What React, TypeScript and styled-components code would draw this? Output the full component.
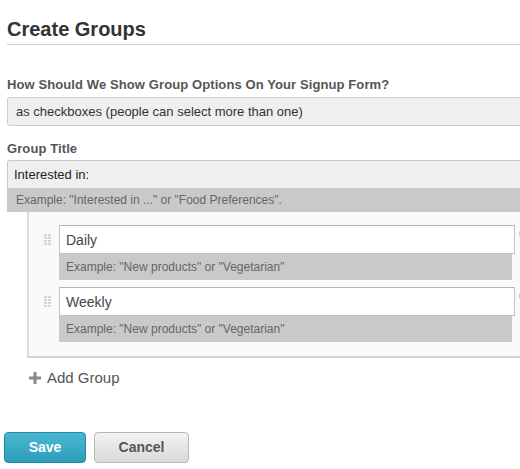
import React from "react";
import styled, { createGlobalStyle } from "styled-components";

const Global = createGlobalStyle`
  html, body { margin: 0; padding: 0; background: #fff; }
  body { width: 520px; height: 469px; overflow: hidden; font-family: "Liberation Sans", Arial, sans-serif; }
`;

const Page = styled.div`
  width: 580px;
  padding: 17px 0 0 7px;
  box-sizing: border-box;
`;

const Heading = styled.h1`
  margin: 0;
  font-size: 20px;
  line-height: 24px;
  font-weight: bold;
  color: #333;
  padding-bottom: 3px;
  border-bottom: 1px solid #cfcfcf;
`;

const Label = styled.div<{ $top: number }>`
  margin-top: ${(p) => p.$top}px;
  font-size: 13px;
  line-height: 16px;
  font-weight: bold;
  color: #555;
  letter-spacing: 0.1px;
`;

const Select = styled.div`
  margin-top: 4px;
  height: 27px;
  line-height: 27px;
  padding: 0 8px;
  background: #efefef;
  border: 1px solid #cdcdcd;
  border-radius: 3px;
  font-size: 13px;
  color: #333;
`;

const FieldBlock = styled.div<{ $top: number }>`
  margin-top: ${(p) => p.$top}px;
`;

const TitleInput = styled.div`
  height: 27px;
  line-height: 27px;
  padding: 0 6px;
  background: #efefef;
  border: 1px solid #c9c9c9;
  border-bottom: none;
  border-radius: 3px 0 0 0;
  font-size: 13px;
  color: #222;
`;

const Hint = styled.div<{ $h: number; $pad: number }>`
  height: ${(p) => p.$h}px;
  line-height: ${(p) => p.$h}px;
  padding-left: ${(p) => p.$pad}px;
  background: #c9c9c9;
  font-size: 12px;
  color: #666;
`;

const Panel = styled.div`
  margin-left: 20px;
  padding: 13px 0 14px 0;
  background: #fafafa;
  border-left: 2px solid #dcdcdc;
  border-bottom: 2px solid #d2d2d2;
  display: flex;
  flex-direction: column;
  gap: 7px;
`;

const Item = styled.div`
  display: flex;
  align-items: flex-start;
  position: relative;
  width: 486px;
`;

const Handle = styled.div`
  width: 7px;
  margin: 9px 8px 0 15px;
  display: grid;
  grid-template-columns: 3px 3px;
  column-gap: 1px;
  row-gap: 1px;
  & > span { width: 3px; height: 2px; background: #d4d4d4; }
`;

const ItemBody = styled.div`
  flex: 1;
  display: flex;
  flex-direction: column;
`;

const ItemInput = styled.div`
  height: 27px;
  line-height: 28px;
  padding: 0 6px;
  background: #fff;
  border: 1px solid #c2c2c2;
  border-top-color: #b5b5b5;
  font-size: 14px;
  color: #444;
`;

const ItemHint = styled(Hint)`
  margin-right: 3px;
`;

const Remove = styled.div`
  position: absolute;
  left: 490px;
  top: 5px;
  width: 8px;
  height: 8px;
  border-radius: 50%;
  background: #c8c8c8;
`;

const AddRow = styled.div`
  margin: 11px 0 0 22px;
  display: flex;
  align-items: center;
  gap: 6px;
  font-size: 15px;
  line-height: 18px;
  color: #555;
`;

const Buttons = styled.div`
  margin: 45px 0 0 -3px;
  display: flex;
  gap: 8px;
`;

const Button = styled.div<{ $primary?: boolean }>`
  height: 29px;
  line-height: 29px;
  width: ${(p) => (p.$primary ? 80 : 93)}px;
  text-align: center;
  border-radius: 4px;
  font-size: 14px;
  font-weight: bold;
  border: 1px solid ${(p) => (p.$primary ? "#1f8aa5" : "#b8b8b8")};
  color: ${(p) => (p.$primary ? "#fff" : "#555")};
  background: ${(p) =>
    p.$primary
      ? "linear-gradient(#4ab8d1, #2c9dba)"
      : "linear-gradient(#f3f3f3, #d9d9d9)"};
`;

const Plus = () => (
  <svg width="12" height="12" viewBox="0 0 12 12">
    <path d="M4.5 0h3v4.5H12v3H7.5V12h-3V7.5H0v-3h4.5z" fill="#8a8a8a" />
  </svg>
);

const DragHandle = () => (
  <Handle>
    {Array.from({ length: 8 }).map((_, i) => (
      <span key={i} />
    ))}
  </Handle>
);

const groups = ["Daily", "Weekly"];

export default function App() {
  return (
    <>
      <Global />
      <Page>
        <Heading>Create Groups</Heading>
        <Label $top={32}>How Should We Show Group Options On Your Signup Form?</Label>
        <Select>as checkboxes (people can select more than one)</Select>
        <Label $top={15}>Group Title</Label>
        <FieldBlock $top={3}>
          <TitleInput>Interested in:</TitleInput>
          <Hint $h={24} $pad={9}>Example: "Interested in ..." or "Food Preferences".</Hint>
        </FieldBlock>
        <Panel>
          {groups.map((g) => (
            <Item key={g}>
              <DragHandle />
              <ItemBody>
                <ItemInput>{g}</ItemInput>
                <ItemHint $h={26} $pad={7}>Example: "New products" or "Vegetarian"</ItemHint>
              </ItemBody>
              <Remove />
            </Item>
          ))}
        </Panel>
        <AddRow>
          <Plus />
          Add Group
        </AddRow>
        <Buttons>
          <Button $primary>Save</Button>
          <Button>Cancel</Button>
        </Buttons>
      </Page>
    </>
  );
}
